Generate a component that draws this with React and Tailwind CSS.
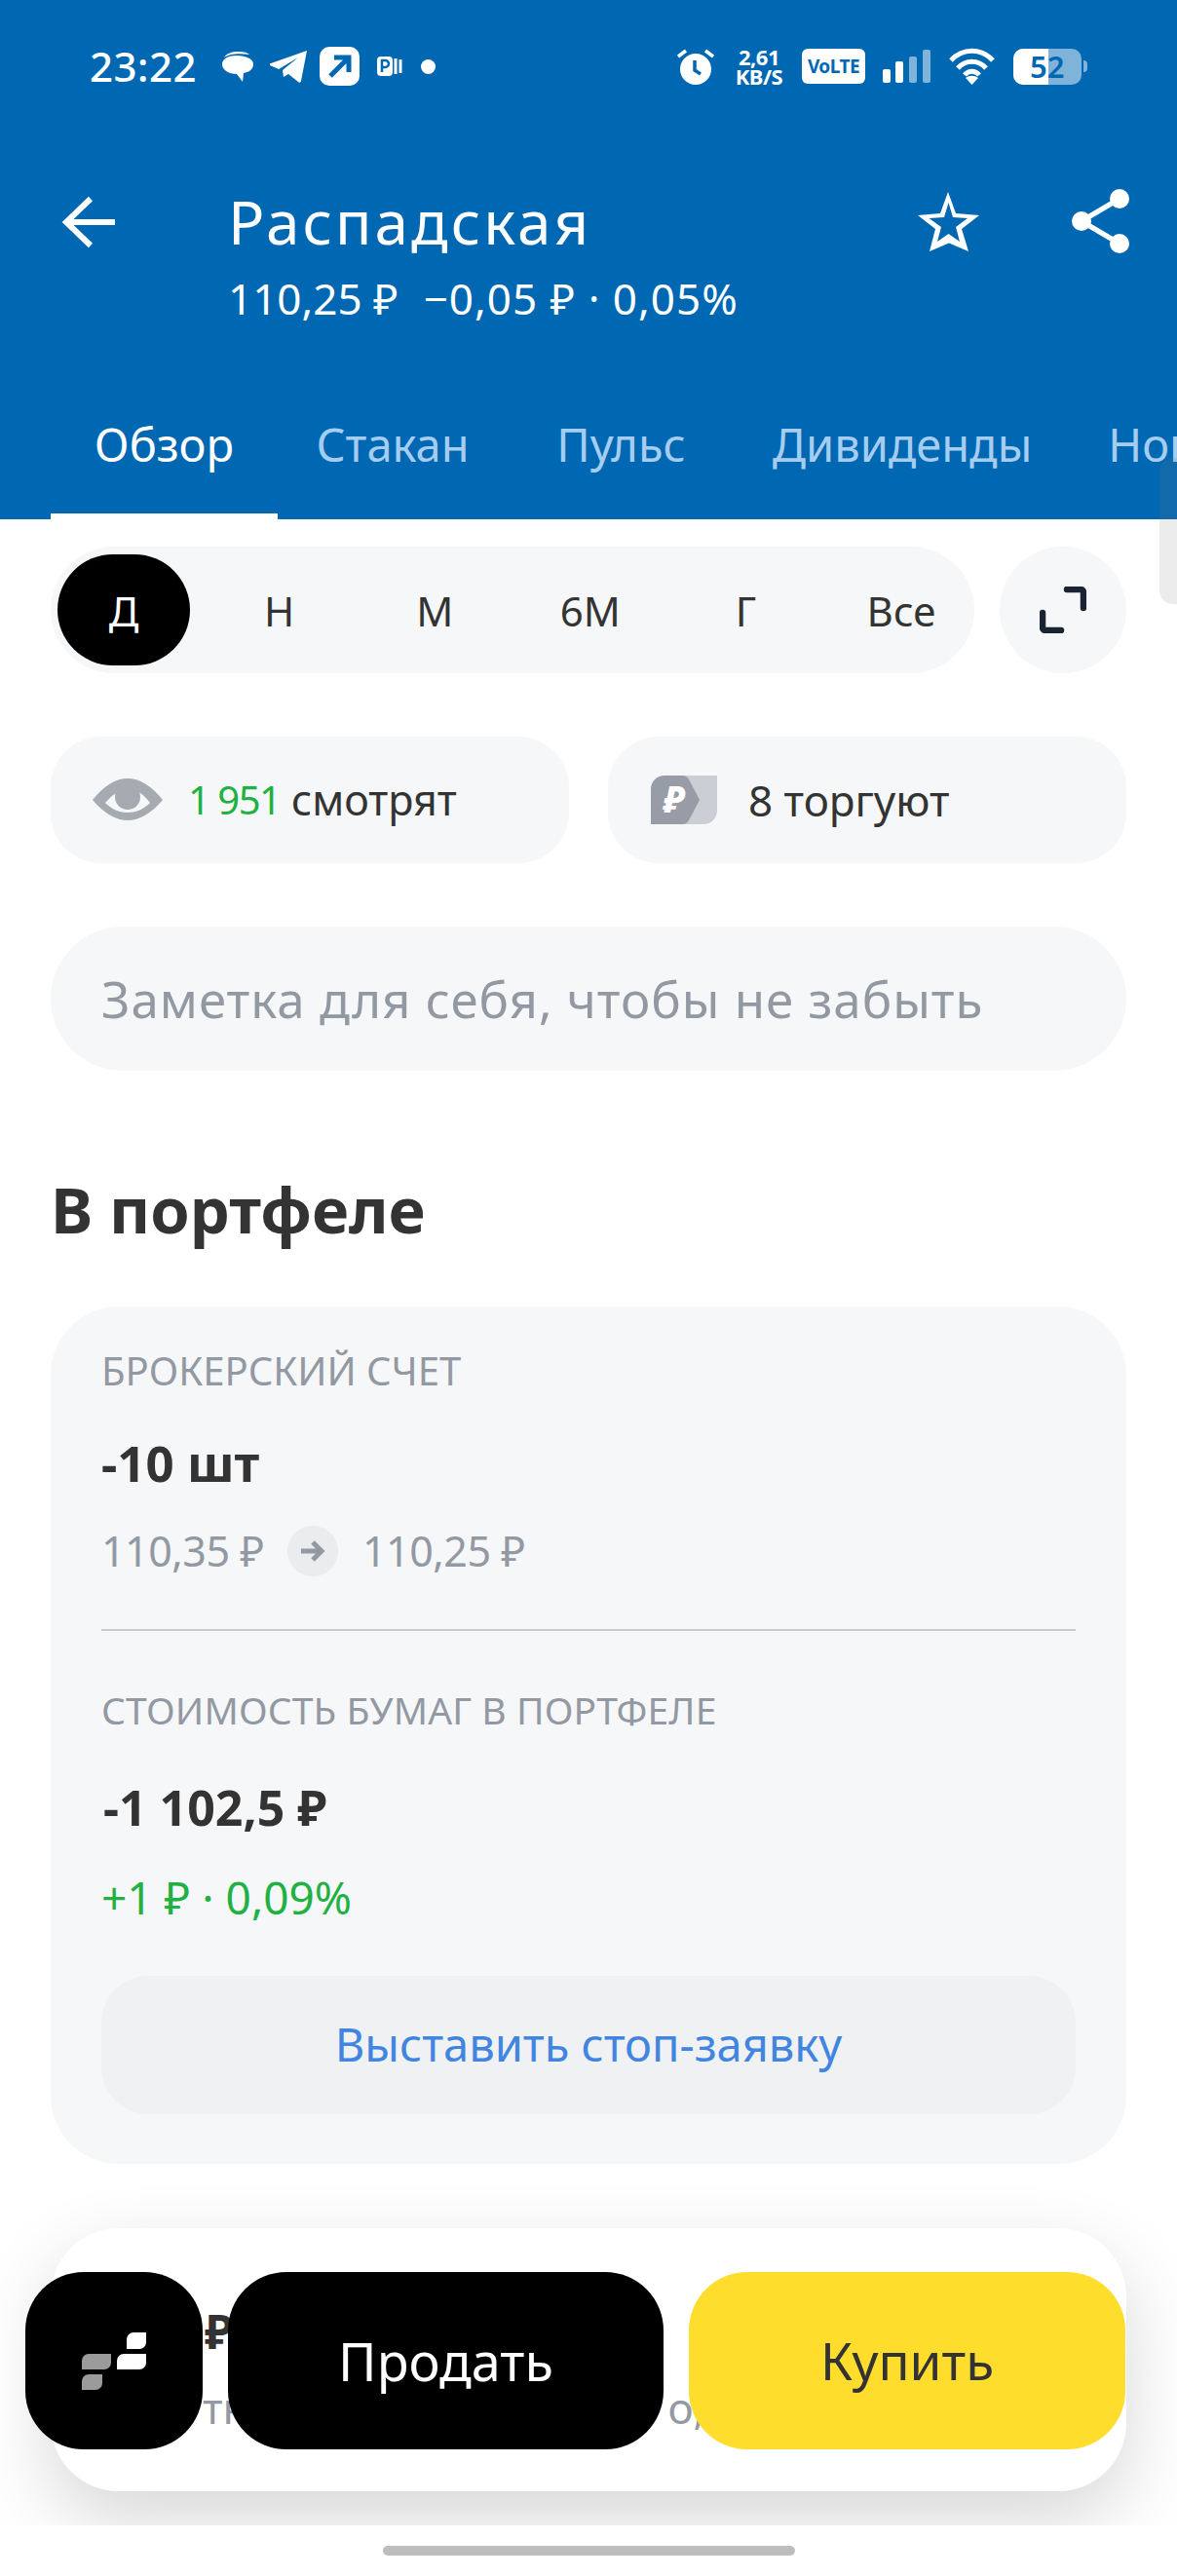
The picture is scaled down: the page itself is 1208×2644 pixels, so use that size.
const font = { fontFamily: '"Noto Sans", sans-serif' };

function StatusBar() {
  return (
    <div className="flex h-[136px] items-center justify-between pl-[92px] pr-[92px] text-white">
      <div className="flex items-center">
        <span className="w-[110px] text-[42px] font-medium leading-none tracking-[0.5px]">23:22</span>
        {/* message */}
        <svg className="ml-[25px]" width="34" height="32" viewBox="0 0 34 32" fill="white">
          <path d="M3 7C6 2 12 1 18 1c5 0 9 1 11 3-6-1-14-1-19 0C7 5 4 6 3 7z" />
          <path d="M1 14C1 8 8 5 16 5s17 3 17 9-7 9-10 9l-1 9-6-8C8 24 1 20 1 14z" />
        </svg>
        {/* telegram */}
        <svg className="ml-[16px]" width="39" height="33" viewBox="0 0 39 33" fill="white">
          <path d="M38 0L32 31c-.3 2-2 2-3 1l-10-8-5 3-1-7L29 7 9 19 0 15c-1-1-1-2 1-2z" />
        </svg>
        <div className="ml-[12px] flex h-[40px] w-[41px] items-center justify-center rounded-[10px] bg-white">
          <svg width="26" height="26" viewBox="0 0 26 26" fill="none" stroke="#0067B3" strokeWidth="5">
            <path d="M3 23L21 5M7 4h15v15" />
          </svg>
        </div>
        <svg className="ml-[18px]" width="26" height="22" viewBox="0 0 26 22" fill="none">
          <rect x="0" y="1" width="16" height="20" rx="4" fill="white" />
          <path d="M5 17V5h3.500a3 3 0 010 7H5" stroke="#0067B3" strokeWidth="2.500" />
          <path d="M19 3v16M24 4v14" stroke="white" strokeWidth="3" />
        </svg>
        <div className="ml-[19px] h-[15px] w-[15px] rounded-full bg-white" />
      </div>

      <div className="flex items-center">
        {/* alarm */}
        <svg width="38" height="38" viewBox="0 0 38 38" fill="none">
          <circle cx="19" cy="22" r="16" fill="white" />
          <path d="M1 9l8-6M37 9l-8-6" stroke="white" strokeWidth="3.500" />
          <path d="M18 13v10l6 4" stroke="#0067B3" strokeWidth="3.500" />
        </svg>
        <div className="ml-[19px] flex h-[40px] w-[54px] flex-col items-center justify-center text-[22px] font-bold leading-[20px] tracking-[-0.5px]">
          <span>2,61</span>
          <span>KB/S</span>
        </div>
        <div className="ml-[17px] flex h-[36px] w-[65px] items-center justify-center rounded-[6px] bg-white text-[19px] font-bold tracking-[-0.5px] text-[#0067B3]">
          VoLTE
        </div>
        <svg className="ml-[18px]" width="49" height="34" viewBox="0 0 49 34" fill="white">
          <rect x="0" y="20" width="8" height="14" rx="2" />
          <rect x="13" y="12" width="8" height="22" rx="2" />
          <rect x="27" y="7" width="8" height="27" rx="2" opacity="0.5" />
          <rect x="41" y="0" width="8" height="34" rx="2" opacity="0.5" />
        </svg>
        <svg className="ml-[19px]" width="47" height="38" viewBox="0 0 47 38" fill="none" stroke="white" strokeWidth="5">
          <path d="M2 13C14 0 33 0 45 13" />
          <path d="M9 21C17 12 30 12 38 21" />
          <path d="M16 28C20 23 27 23 31 28" />
          <path d="M23.500 38L17 31c4-3 9-3 13 0z" fill="white" stroke="none" />
        </svg>
        <div className="relative ml-[19px] flex h-[37px] w-[70px] rounded-[10px] bg-white/50">
          <div className="h-full w-[36px] rounded-l-[10px] bg-white" />
          <span className="absolute left-[17px] top-[-1px] text-[31px] font-semibold leading-[38px] text-[#0067B3]">52</span>
        </div>
        <div className="ml-[2px] h-[12px] w-[4px] rounded-r-full bg-white/50" />
      </div>
    </div>
  );
}

function Tab({ label, active, className }) {
  return (
    <div
      className={`flex h-[135px] shrink-0 items-start justify-center pt-[28px] text-[47px] leading-[60px] ${className} ${
        active ? "border-b-[6px] border-white text-white" : "text-[#A5CDF0]"
      }`}
    >
      {label}
    </div>
  );
}

function Header() {
  return (
    <div className="h-[533px] bg-[#0067B3] text-white">
      <StatusBar />
      <div className="mt-[55px] flex items-start pl-[62px] pr-[48px]">
        <svg className="mt-[9px]" width="58" height="56" viewBox="0 0 58 56" fill="none" stroke="white" strokeWidth="6">
          <path d="M31 4L6 28l25 24M6 28h50" />
        </svg>
        <div className="ml-[114px] flex-1">
          <div className="text-[62px] leading-[72px] tracking-[3px]">Распадская</div>
          <div className="mt-[18px] whitespace-nowrap text-[44px] leading-[50px]">
            <span>110,25 ₽</span>
            <span className="ml-[26px] tracking-[1px]">−0,05 ₽ · 0,05%</span>
          </div>
        </div>
        <svg className="mt-[6px]" width="64" height="62" viewBox="0 0 64 62" fill="white" fillRule="evenodd">
          <path d="M31 0l8 22 24 2-18 14 7 23-20-8.500L12 61l6-23L0 24l23-2zM31.500 11L27 26l-15.500 1L24 36l-4 15 11.500-8L43 51l-4-15 12-9-15-1z" />
        </svg>
        <svg className="ml-[92px] mt-[1px]" width="62" height="68" viewBox="0 0 62 68" fill="white">
          <path d="M51 12L12 35l39 23" fill="none" stroke="white" strokeWidth="5.500" />
          <circle cx="51" cy="12" r="10" />
          <circle cx="12" cy="35" r="10" />
          <circle cx="51" cy="58" r="10" />
        </svg>
      </div>
      <div className="mt-[67px] flex overflow-hidden whitespace-nowrap pl-[52px]">
        <Tab label="Обзор" active className="w-[233px]" />
        <Tab label="Стакан" className="ml-[41px] w-[154px]" />
        <Tab label="Пульс" className="ml-[92px] w-[131px]" />
        <Tab label="Дивиденды" className="ml-[90px] w-[266px]" />
        <Tab label="Новости" className="ml-[84px] w-[180px]" />
      </div>
    </div>
  );
}

const ranges = ["Д", "Н", "М", "6М", "Г", "Все"];

function RangeRow() {
  return (
    <div className="mt-[28px] flex gap-[26px]">
      <div className="flex h-[130px] w-[948px] items-center justify-between rounded-full bg-[#F6F7F8] px-[7px]">
        {ranges.map((r, i) => (
          <div
            key={r}
            className={`flex h-[114px] w-[136px] items-center justify-center rounded-full text-[42px] ${
              i === 0 ? "bg-black text-white" : "text-[#333333]"
            }`}
          >
            {r}
          </div>
        ))}
      </div>
      <div className="flex h-[130px] w-[130px] items-center justify-center rounded-full bg-[#F6F7F8]">
        <svg width="48" height="48" viewBox="0 0 48 48" fill="none" stroke="#1A2433" strokeWidth="6.500" strokeLinecap="round" strokeLinejoin="round">
          <path d="M28 3h14a3 3 0 013 3v16M3 27v15a3 3 0 003 3h16" />
        </svg>
      </div>
    </div>
  );
}

function StatChips() {
  return (
    <div className="mt-[65px] flex gap-[40px]">
      <div className="flex h-[130px] w-[532px] items-center rounded-[52px] bg-[#F6F7F8] pl-[43px] text-[43px] text-[#333333]">
        <svg width="72" height="44" viewBox="0 0 72 44">
          <path d="M0 22C12 7 24 0 36 0s24 7 36 22c-12 14-24 21-36 21S12 36 0 22z" fill="#A6ABB2" />
          <path d="M13 25C20 17 27 12 36 11s17 6 23 14c-7 7-15 10-23 10S20 32 13 25z" fill="#F6F7F8" />
          <circle cx="36" cy="19" r="13" fill="#A6ABB2" />
        </svg>
        <span className="ml-[26px] w-[93px] whitespace-nowrap text-[40px] tracking-[-1.500px] text-[#1FB141]">1 951</span>
        <span className="ml-[13px]">смотрят</span>
      </div>
      <div className="flex h-[130px] w-[532px] items-center rounded-[52px] bg-[#F6F7F8] pl-[44px] text-[44px] text-[#333333]">
        <svg width="68" height="50" viewBox="0 0 68 50">
          <path d="M30 0h38v36a14 14 0 01-14 14H30z" fill="#CBCFD5" />
          <path d="M0 50V14A14 14 0 0114 0h18c3 0 5 1 7 4l11 21-11 21c-2 3-4 4-7 4z" fill="#979CA6" />
          <text x="24" y="38" textAnchor="middle" fill="white" fontSize="38" fontWeight="800" fontStyle="italic" fontFamily="Noto Sans">₽</text>
        </svg>
        <span className="ml-[32px]">8 торгуют</span>
      </div>
    </div>
  );
}

function PortfolioCard() {
  return (
    <div className="mt-[62px] h-[880px] rounded-[70px] bg-[#F6F7F8] px-[52px] pt-[44px]">
      <div className="text-[40px] leading-[44px] text-[#9299A2]">БРОКЕРСКИЙ СЧЕТ</div>
      <div className="mt-[42px] text-[51px] font-bold leading-[60px] text-[#333333]">-10 шт</div>
      <div className="mt-[35px] flex h-[52px] items-center text-[43px] tracking-[-0.5px] text-[#9299A2]">
        <span className="w-[167px]">110,35 ₽</span>
        <div className="ml-[24px] flex h-[52px] w-[52px] items-center justify-center rounded-full bg-[#EBECEE]">
          <svg width="26" height="24" viewBox="0 0 26 24" fill="none" stroke="#9299A2" strokeWidth="5">
            <path d="M1 12h21M13 3l9 9-9 9" />
          </svg>
        </div>
        <span className="ml-[25px]">110,25 ₽</span>
      </div>
      <div className="mt-[54px] h-[2px] bg-[#C9CBCE]" />
      <div className="mt-[59px] text-[39px] leading-[44px] tracking-[0.1px] text-[#9299A2]">СТОИМОСТЬ БУМАГ В ПОРТФЕЛЕ</div>
      <div className="mt-[48px] pl-[2px] text-[50px] font-bold leading-[60px] text-[#333333]">-1 102,5 ₽</div>
      <div className="mt-[32px] text-[46px] leading-[60px] text-[#1FB141]">+1 ₽ · 0,09%</div>
      <div className="mt-[51px] flex h-[142px] items-center justify-center rounded-[48px] bg-[#F0F1F3] pb-[2px] text-[47px] text-[#4285E0]">
        Выставить стоп-заявку
      </div>
    </div>
  );
}

function BottomBar() {
  return (
    <div className="absolute left-[26px] top-[2332px] flex h-[182px] w-[1130px] gap-[26px]">
      <div className="flex h-full w-[182px] items-center justify-center rounded-[60px] bg-black">
        {/* logo tiles */}
        <svg width="66" height="59" viewBox="0 0 66 59">
          <path d="M53 0h13v10a7 7 0 01-7 7H46V7a7 7 0 017-7z" fill="white" />
          <path d="M43 22h23v9a7 7 0 01-7 7H36V29a7 7 0 017-7z" fill="white" />
          <path d="M7 22h23v9a7 7 0 01-7 7H0V29a7 7 0 017-7z" fill="#9B9B9B" />
          <path d="M7 43h14v9a7 7 0 01-7 7H0V50a7 7 0 017-7z" fill="#9B9B9B" />
        </svg>
      </div>
      <div className="flex h-full w-[447px] items-center justify-center rounded-[60px] bg-black text-[54px] text-white">
        Продать
      </div>
      <div className="flex h-full w-[448px] items-center justify-center rounded-[60px] bg-[#FFDD2D] text-[53px] text-[#333333]">
        Купить
      </div>
    </div>
  );
}

export default function App() {
  return (
    <div className="relative h-[2644px] w-[1208px] overflow-hidden bg-white" style={font}>
      <Header />
      <div className="h-[2059px] overflow-hidden px-[52px]">
        <RangeRow />
        <StatChips />
        <div className="mt-[65px] flex h-[148px] items-center rounded-[74px] bg-[#F6F7F8] pl-[52px] text-[51px] tracking-[1px] text-[#9299A2]">
          Заметка для себя, чтобы не забыть
        </div>
        <div className="mt-[104px] text-[65px] font-bold leading-[76px] text-[#333333]">В портфеле</div>
        <PortfolioCard />
        <div className="relative mt-[66px] h-[270px] rounded-[70px] bg-white shadow-[0_30px_80px_rgba(0,0,0,0.16)]">
          <div className="pl-[158px] pt-[76px] text-[48px] font-bold leading-[60px] text-[#333333]">₽</div>
          <div className="flex pl-[156px] pt-[18px] text-[44px] leading-[60px] text-[#9299A2]">
            <span>тн</span>
            <span className="ml-[430px]">о,</span>
          </div>
        </div>
      </div>
      <div className="flex h-[52px] justify-center pt-[21px]">
        <div className="h-[10px] w-[423px] rounded-full bg-[#BDBDBD]" />
      </div>
      <BottomBar />
      {/* scrollbar overlay */}
      <div className="absolute right-0 top-[470px] h-[150px] w-[18px] rounded-l-[14px] bg-[#808080]/15" />
    </div>
  );
}
